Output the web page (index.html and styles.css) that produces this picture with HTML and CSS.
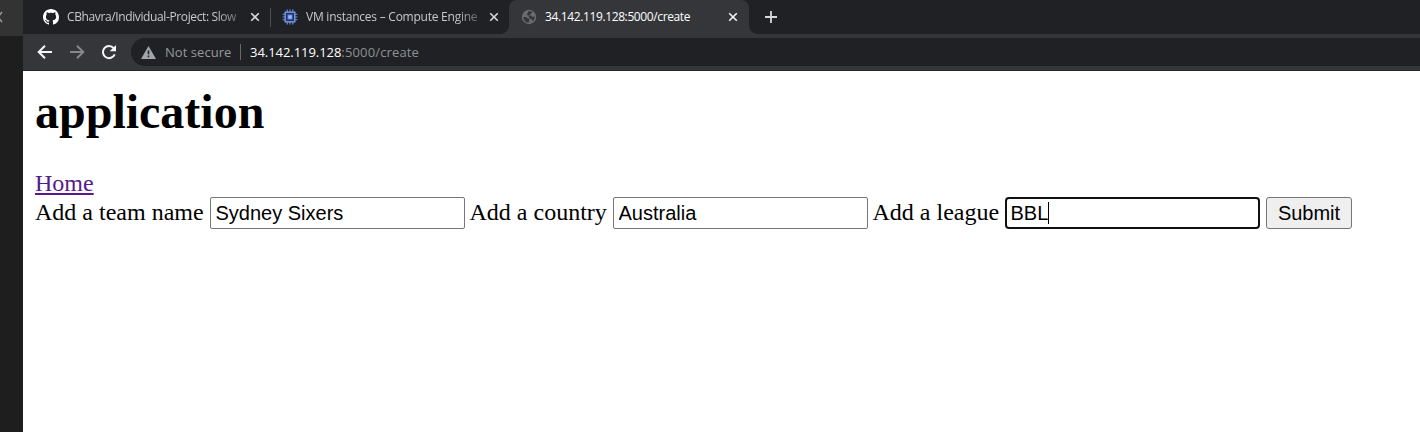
FILE: index.html
```html
<!DOCTYPE html>
<html lang="en">
<head>
<meta charset="utf-8">
<title>34.142.119.128:5000/create</title>
<link rel="stylesheet" href="styles.css">
</head>
<body>
<aside class="side"><div class="side-top"><svg width="4" height="36" viewBox="0 0 4 36"><path d="M2 12L-2 17l4 5" fill="none" stroke="#999" stroke-width="1.5"/></svg></div></aside>
<div class="browser">
  <div class="tabs">
    <div class="tab tab-github">
      <svg class="favicon" viewBox="0 0 16 16"><path fill="#fff" d="M8 0C3.58 0 0 3.58 0 8c0 3.54 2.29 6.53 5.47 7.59.4.07.55-.17.55-.38 0-.19-.01-.82-.01-1.49-2.01.37-2.53-.49-2.69-.94-.09-.23-.48-.94-.82-1.13-.28-.15-.68-.52-.01-.53.63-.01 1.08.58 1.23.82.72 1.21 1.87.87 2.33.66.07-.52.28-.87.51-1.07-1.78-.2-3.64-.89-3.64-3.95 0-.87.31-1.59.82-2.15-.08-.2-.36-1.02.08-2.12 0 0 .67-.21 2.2.82.64-.18 1.32-.27 2-.27s1.36.09 2 .27c1.53-1.04 2.2-.82 2.2-.82.44 1.1.16 1.92.08 2.12.51.56.82 1.27.82 2.15 0 3.07-1.87 3.75-3.65 3.95.29.25.54.73.54 1.48 0 1.07-.01 1.93-.01 2.2 0 .21.15.46.55.38A8.01 8.01 0 0 0 16 8c0-4.42-3.58-8-8-8z"/></svg>
      <span class="title fade">CBhavra/Individual-Project: Slow</span>
      <svg class="close" viewBox="0 0 10 10"><path d="M1.2 1.2l7.6 7.6M8.8 1.2L1.2 8.8"/></svg>
    </div>
    <div class="tab tab-vm">
      <svg class="favicon" viewBox="0 0 16 16"><path d="M5.2 .6v14.800M8 .6v14.800M10.800 .6v14.800M.6 5.200h14.800M.6 8h14.800M.6 10.800h14.800" stroke="#6f94e8" stroke-width="1.1"/><rect x="3.200" y="3.200" width="9.600" height="9.600" fill="#23305a" stroke="#7397ea" stroke-width="1.400"/><rect x="6" y="6" width="4" height="4" fill="#9dbbfa" stroke="#5f86de"/></svg>
      <span class="title fade">VM instances – Compute Engine</span>
      <svg class="close" viewBox="0 0 10 10"><path d="M1.2 1.2l7.6 7.6M8.8 1.2L1.2 8.8"/></svg>
    </div>
    <div class="tab tab-active">
      <svg class="favicon" viewBox="0 0 16 16"><circle cx="8" cy="8" r="7.2" fill="#696b6f"/><path d="M2.3 8.1c1.8-.5 3.3 0 4 .9.5.7 1.7.3 2.1 1.2.4 1-.8 1.2-.7 3.5C4.500 13.900 2.200 11 2.300 8.100zM7.300 2.300c1.500-.4 3 0 4.200.8-.2 1-1 .9-1.600 1.300-.7.4 0 1.200-.9 1.500-.8.3-1.200-.4-1.800.3 1 .7 2.300-.1 3.200.8.9 1 1.900.8 3.300.7-.1 2-1 3.500-2.200 4.500-.2-1.200-.2-2.200-1.500-2.300-1.200-.1-2-.9-1.700-2L6 5.800z" fill="#35363a"/></svg>
      <span class="title">34.142.119.128:5000/create</span>
      <svg class="close" viewBox="0 0 10 10"><path d="M1.2 1.200l7.600 7.600M8.800 1.200L1.200 8.800"/></svg>
    </div>
    <svg class="new-tab" viewBox="0 0 12 12"><path d="M6 0v12M0 6h12"/></svg>
  </div>
  <div class="toolbar">
    <svg class="nav" viewBox="0 0 16 16"><path d="M15 8H2M8 1.700L1.700 8 8 14.300" fill="none" stroke="#f4f5f6" stroke-width="2"/></svg>
    <svg class="nav" viewBox="0 0 16 16"><path d="M1 8h13M8 1.700L14.300 8 8 14.300" fill="none" stroke="#85878a" stroke-width="2"/></svg>
    <svg class="nav" viewBox="0 0 16 16"><path d="M13.700 10.300A6.100 6.100 0 1 1 12.700 4.100" fill="none" stroke="#f4f5f6" stroke-width="2"/><path d="M15 .9v6.300H8.700z" fill="#f4f5f6"/></svg>
    <div class="omnibox">
      <svg class="warn" viewBox="0 0 15 13"><path fill="#a2a5a9" fill-rule="evenodd" d="M7.500 0L15 13H0zM6.700 4.600v3.600h1.600V4.600zm0 5v1.600h1.600V9.600z"/></svg>
      <span class="secure">Not secure</span>
      <span class="divider"></span>
      <span class="url"><b>34.142.119.128</b>:5000/create</span>
    </div>
  </div>
  <main class="page">
    <h1>application</h1>
    <a class="home" href="#">Home</a>
    <form class="form">
      <label class="l-team" for="team">Add a team name</label>
      <input id="team" type="text" value="Sydney Sixers">
      <label class="l-country" for="country">Add a country</label>
      <input id="country" type="text" value="Australia">
      <label class="l-league" for="league">Add a league</label>
      <div class="focused" id="league"><span>BBL</span><i class="caret"></i></div>
      <button type="button">Submit</button>
    </form>
  </main>
</div>
</body>
</html>
```
FILE: styles.css
```css
* { box-sizing: border-box; }
body { margin: 0; height: 432px; display: flex; overflow: hidden; background: #fff; }
svg { display: block; flex: none; }
.side { width: 23px; flex: none; background: #1e1e1e; }
.side-top { height: 36px; background: #333334; }
.browser { flex: 1; min-width: 0; font-family: "Open Sans", sans-serif; }
.tabs { height: 34px; background: #202124; display: flex; align-items: center; }
.tab { height: 34px; display: flex; align-items: center; flex: none; position: relative; }
.tab-github { width: 248px; padding-left: 20px; }
.tab-github::after { content: ""; position: absolute; right: 0; top: 8px; width: 1px; height: 19px; background: #4c4e52; }
.tab-vm { width: 238px; padding-left: 11px; }
.tab-active { width: 240px; padding-left: 12px; background: #35363a; border-radius: 8px 8px 0 0; }
.tab-active::before, .tab-active::after { content: ""; position: absolute; bottom: 0; width: 8px; height: 8px; }
.tab-active::before { left: -8px; background: radial-gradient(circle at 0 0, transparent 7.5px, #35363a 8px); }
.tab-active::after { right: -8px; background: radial-gradient(circle at 100% 0, transparent 7.5px, #35363a 8px); }
.favicon { width: 16px; height: 16px; }
.title { margin-left: 8px; width: 173px; font-size: 12px; line-height: 18px; white-space: nowrap; color: #c6c9cd; }
.tab-github .title { letter-spacing: -0.38px; }
.tab-vm .title { letter-spacing: -0.24px; }
.tab-active .title { width: 180px; color: #fff; letter-spacing: -0.38px; }
.fade { -webkit-mask-image: linear-gradient(90deg, #000 86%, rgba(0,0,0,.35)); mask-image: linear-gradient(90deg, #000 86%, rgba(0,0,0,.35)); }
.close { width: 10px; height: 10px; margin-left: 10px; fill: none; stroke: #d6d8da; stroke-width: 1.6; }
.tab-active .close { margin-left: 3px; stroke: #f1f3f4; }
.new-tab { width: 12px; height: 12px; margin-left: 16px; fill: none; stroke: #d5d7da; stroke-width: 1.8; }
.toolbar { height: 37px; background: #35363a; border-bottom: 1px solid #252629; display: flex; align-items: center; padding-left: 14px; gap: 16px; }
.nav { width: 16px; height: 16px; }
.omnibox { flex: 1; height: 28px; margin-left: -2px; padding-left: 10px; background: #202124; border-radius: 14px 0 0 14px; display: flex; align-items: center; font-size: 13px; white-space: nowrap; }
.warn { width: 15px; height: 13px; }
.secure { margin-left: 9px; width: 67px; color: #96999d; letter-spacing: 0.05px; }
.divider { width: 1px; height: 16px; margin: 0 9px 0 8px; background: #66686c; }
.url { color: #8e9195; letter-spacing: 0.15px; }
.url b { font-weight: 400; color: #fff; letter-spacing: -0.05px; }
.page { padding: 13px 0 0 12px; font: 24px/27px "Liberation Serif", serif; color: #000; }
.page h1 { margin: 0 0 31px; font-size: 48px; line-height: 55px; }
.home { display: block; width: max-content; color: #551a8b; }
.form { display: flex; align-items: center; height: 32px; }
.form label { white-space: nowrap; flex: none; padding-bottom: 2px; }
.l-team { width: 175px; }
.form .l-country { width: 148px; padding-left: 4.5px; }
.form .l-league { width: 137px; padding-left: 4.5px; }
.form input, .focused { flex: none; width: 255px; height: 32px; margin: 0; padding: 0 4.5px; border: 1px solid #767676; border-radius: 2px; background: #fff; font: 20px "Liberation Sans", sans-serif; color: #000; outline: none; }
.form .focused { border: 2px solid #101010; border-radius: 4px; padding: 0 3.5px; display: flex; align-items: center; }
.caret { width: 1px; height: 22px; background: #000; }
.form button { width: 86px; height: 32px; margin: 0 0 0 6px; padding: 0; border: 1px solid #767676; border-radius: 3px; background: #efefef; font: 20px "Liberation Sans", sans-serif; color: #000; }
```
